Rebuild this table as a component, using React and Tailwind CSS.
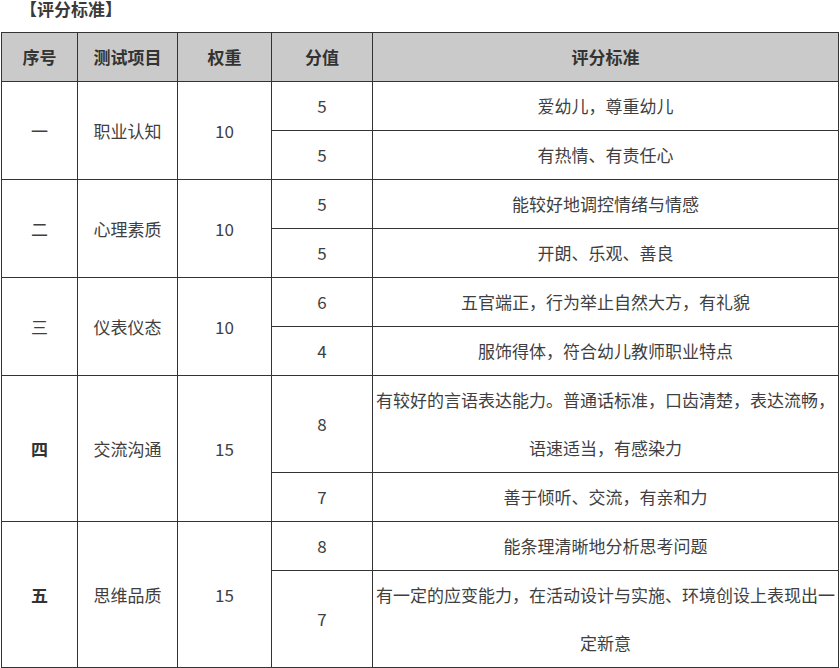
import React from "react";

const font = { fontFamily: '"Noto Sans CJK SC", "Noto Sans", sans-serif' };

const groups = [
  {
    no: "一",
    bold: false,
    item: "职业认知",
    weight: "10",
    rows: [
      { score: "5", text: "爱幼儿，尊重幼儿", tall: false },
      { score: "5", text: "有热情、有责任心", tall: false },
    ],
  },
  {
    no: "二",
    bold: false,
    item: "心理素质",
    weight: "10",
    rows: [
      { score: "5", text: "能较好地调控情绪与情感", tall: false },
      { score: "5", text: "开朗、乐观、善良", tall: false },
    ],
  },
  {
    no: "三",
    bold: false,
    item: "仪表仪态",
    weight: "10",
    rows: [
      { score: "6", text: "五官端正，行为举止自然大方，有礼貌", tall: false },
      { score: "4", text: "服饰得体，符合幼儿教师职业特点", tall: false },
    ],
  },
  {
    no: "四",
    bold: true,
    item: "交流沟通",
    weight: "15",
    rows: [
      {
        score: "8",
        text: "有较好的言语表达能力。普通话标准，口齿清楚，表达流畅，语速适当，有感染力",
        tall: true,
      },
      { score: "7", text: "善于倾听、交流，有亲和力", tall: false },
    ],
  },
  {
    no: "五",
    bold: true,
    item: "思维品质",
    weight: "15",
    rows: [
      { score: "8", text: "能条理清晰地分析思考问题", tall: false },
      {
        score: "7",
        text: "有一定的应变能力，在活动设计与实施、环境创设上表现出一定新意",
        tall: true,
      },
    ],
  },
];

const cell = "border border-[#333333] text-center align-middle p-0";

export default function App() {
  return (
    <div className="w-[840px] h-[668px] bg-white overflow-hidden" style={font}>
      <div className="h-[32px] pl-[20px]">
        <div className="text-[17px] leading-[18px] font-bold text-[#3a3a3a]">【评分标准】</div>
      </div>
      <table className="table-fixed border-collapse w-[838px] ml-[1px] text-[17px] text-[#3f3f3f]">
        <colgroup>
          <col className="w-[76px]" />
          <col className="w-[100px]" />
          <col className="w-[94px]" />
          <col className="w-[101px]" />
          <col />
        </colgroup>
        <thead>
          <tr className="h-[49px] bg-[#cacaca] text-[#333333] font-bold text-[17px]">
            <th className={cell}>序号</th>
            <th className={cell}>测试项目</th>
            <th className={cell}>权重</th>
            <th className={cell}>分值</th>
            <th className={cell}>评分标准</th>
          </tr>
        </thead>
        <tbody>
          {groups.map((g) =>
            g.rows.map((r, i) => (
              <tr key={g.no + i} className={r.tall ? "h-[97px]" : "h-[49px]"}>
                {i === 0 && (
                  <>
                    <td rowSpan={2} className={cell + (g.bold ? " font-bold text-[#333333]" : "")}>
                      {g.no}
                    </td>
                    <td rowSpan={2} className={cell}>
                      {g.item}
                    </td>
                    <td rowSpan={2} className={cell}>
                      {g.weight}
                    </td>
                  </>
                )}
                <td className={cell}>{r.score}</td>
                <td className={cell + " px-[2px] leading-[48px]"}>{r.text}</td>
              </tr>
            ))
          )}
        </tbody>
      </table>
    </div>
  );
}
